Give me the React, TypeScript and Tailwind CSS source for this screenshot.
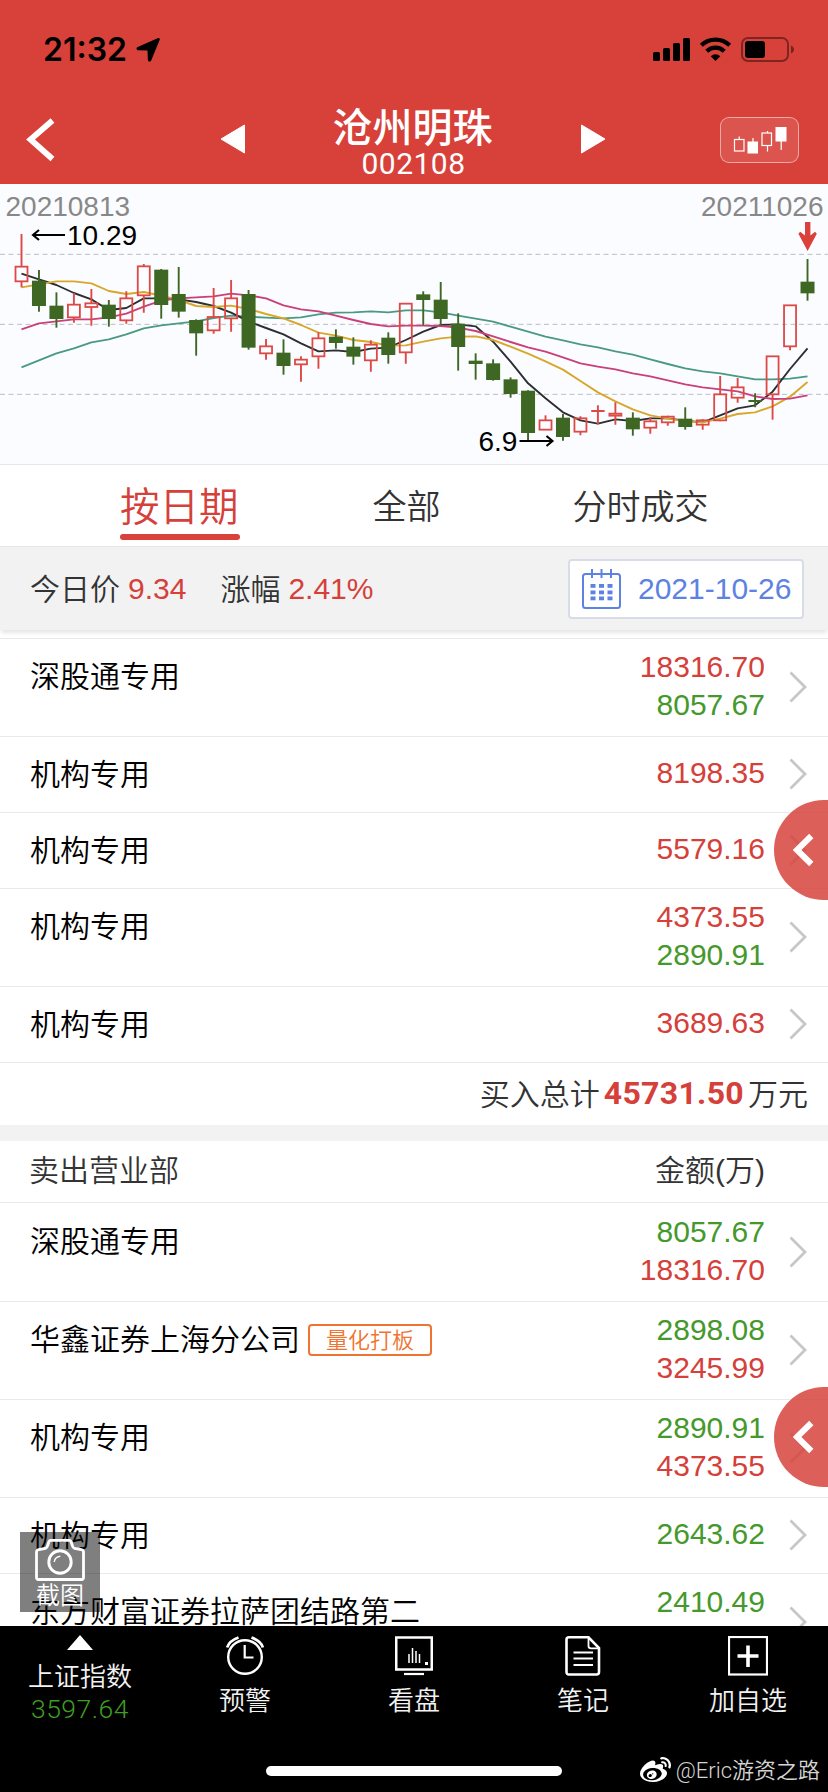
import React from "react";
import { FaWeibo } from "react-icons/fa";

const SANS = "font-['Liberation_Sans','Noto_Sans_CJK_SC',sans-serif]";
const CJK = "font-['Noto_Sans_CJK_SC',sans-serif]";

const RED = "#dd4a45";
const GREEN = "#3f6724";
const STEP = 17.467;
const FIRST_X = 21.5;

// high, body top, body bottom, low, direction; vertical values in thirds of a pixel
type Candle = [number, number, number, number, "r" | "g"];
const candles: Candle[] = [
  [162, 260, 304, 322, "r"], [270, 302, 378, 395, "g"], [337, 377, 417, 443, "g"],
  [339, 374, 412, 428, "r"], [327, 370, 381, 437, "r"], [360, 374, 417, 440, "g"],
  [334, 355, 421, 431, "r"], [252, 259, 346, 398, "r"], [267, 269, 375, 416, "g"],
  [261, 342, 395, 413, "g"], [418, 420, 460, 527, "g"], [324, 411, 451, 461, "r"],
  [300, 355, 415, 455, "r"], [330, 342, 503, 509, "g"], [477, 499, 520, 539, "r"],
  [478, 518, 558, 584, "g"], [529, 539, 553, 605, "r"], [457, 475, 529, 566, "r"],
  [448, 470, 489, 506, "g"], [472, 500, 530, 554, "g"], [481, 494, 541, 575, "r"],
  [457, 473, 525, 551, "g"], [369, 371, 517, 551, "r"], [334, 343, 360, 436, "g"],
  [306, 359, 417, 437, "g"], [400, 431, 501, 572, "g"], [520, 542, 552, 599, "g"],
  [538, 550, 600, 602, "g"], [592, 598, 642, 653, "g"], [631, 632, 759, 781, "g"],
  [706, 721, 749, 749, "r"], [702, 713, 771, 782, "g"], [709, 715, 755, 766, "r"],
  [676, 693, 693, 733, "r"], [667, 701, 707, 734, "r"], [697, 713, 748, 767, "g"],
  [712, 724, 743, 761, "r"], [707, 710, 727, 737, "r"], [682, 716, 741, 749, "g"],
  [718, 721, 734, 749, "r"], [588, 643, 721, 724, "r"], [594, 622, 653, 668, "r"],
  [640, 663, 663, 682, "g"], [529, 529, 643, 719, "r"], [375, 376, 499, 511, "r"],
  [237, 305, 340, 362, "g"],
];

const averages: { color: string; values: number[] }[] = [
  {
    color: "#4a9a80",
    values: [562, 541, 520, 505, 487, 478, 463, 445, 436, 430, 424, 414, 407, 410, 413, 415, 412, 403, 398, 397, 394, 397, 391, 391, 397, 407, 416, 425, 440, 455, 470, 481, 493, 502, 514, 524, 538, 552, 565, 574, 580, 589, 598, 598, 596, 589],
  },
  {
    color: "#2b2f31",
    values: [281, 298, 315, 339, 358, 390, 384, 355, 355, 358, 366, 378, 398, 424, 444, 463, 490, 514, 511, 516, 506, 503, 480, 455, 435, 433, 439, 485, 545, 610, 655, 697, 721, 731, 718, 723, 715, 715, 722, 727, 706, 685, 676, 635, 567, 505],
  },
  {
    color: "#d8a728",
    values: [322, 313, 304, 304, 310, 333, 342, 336, 347, 360, 378, 381, 377, 387, 402, 415, 435, 458, 467, 480, 486, 497, 496, 485, 475, 470, 469, 480, 500, 521, 544, 569, 603, 637, 664, 688, 706, 716, 724, 727, 716, 702, 697, 679, 650, 606],
  },
  {
    color: "#c9407a",
    values: [448, 430, 424, 418, 418, 412, 401, 380, 362, 355, 352, 349, 341, 346, 355, 376, 388, 394, 407, 420, 432, 439, 437, 437, 438, 443, 453, 469, 486, 502, 515, 532, 550, 560, 568, 580, 589, 601, 613, 622, 628, 634, 649, 657, 656, 646],
  },
];

const cx = (i: number) => FIRST_X + i * STEP;
const cy = (v: number) => v / 3 - 4;

function KLine() {
  return (
    <svg className="block h-[280px] w-full bg-[#fbfcff]" viewBox="0 0 828 280">
      {[223, 433, 643].map((v) => (
        <line key={v} x1="0" x2="828" y1={cy(v)} y2={cy(v)} stroke="#bcbcc4" strokeWidth="1" strokeDasharray="5 3.500" />
      ))}
      {averages.map((a) => (
        <polyline
          key={a.color}
          fill="none"
          stroke={a.color}
          strokeWidth="1.9"
          strokeLinejoin="round"
          points={a.values.map((v, i) => `${cx(i)},${cy(v)}`).join(" ")}
        />
      ))}
      {candles.map(([hi, top, bottom, lo, dir], i) => {
        const x = cx(i);
        if (top === bottom) {
          const c = dir === "r" ? RED : GREEN;
          return (
            <g key={i} stroke={c} strokeWidth="1.9">
              <path d={`M${x} ${cy(hi)}V${cy(lo)}M${x - 6.7} ${cy(top)}H${x + 6.7}`} />
            </g>
          );
        }
        if (dir === "g") {
          return (
            <g key={i}>
              <path d={`M${x} ${cy(hi)}V${cy(lo)}`} stroke={GREEN} strokeWidth="1.9" />
              <rect x={x - 7} y={cy(top)} width="14" height={cy(bottom) - cy(top)} fill={GREEN} />
            </g>
          );
        }
        return (
          <g key={i} stroke={RED} fill="none">
            <path d={`M${x} ${cy(hi)}V${cy(top)}M${x} ${cy(bottom)}V${cy(lo)}`} strokeWidth="1.9" />
            <rect x={x - 6} y={cy(top)} width="12" height={cy(bottom) - cy(top)} strokeWidth="1.800" />
          </g>
        );
      })}
      <g className={SANS} fontSize="28">
        <text x="5.5" y="31.5" fill="#888888">20210813</text>
        <text x="823.5" y="31.5" fill="#888888" textAnchor="end">20211026</text>
        <text x="67" y="61" fill="#000">10.29</text>
        <text x="478.500" y="266.5" fill="#000">6.9</text>
      </g>
      <g stroke="#000" strokeWidth="2.1" fill="none">
        <path d="M32.500 51H65M39 46L33 51L39 56" />
        <path d="M519.500 257H552M546.500 252L552.500 257L546.500 262" />
      </g>
      <path d="M805 38h5.4v13.500l4.600-3.700 1.800 1.900-9.200 17.300-9.200-17.300 1.800-1.900 4.800 3.700z" fill="#d9413a" />
    </svg>
  );
}

function StatusBar() {
  return (
    <div className="flex h-[98px] items-center pl-[43px] pr-[33px] pt-px">
      <span className="font-['Inter',sans-serif] text-[32px] font-semibold leading-none text-black">21:32</span>
      <svg className="ml-[8px] h-[26px] w-[26px]" viewBox="0 0 26 26">
        <path d="M23.2 1.1c1-.4 2 .5 1.500 1.600L16.300 23.300c-.7 1.800-3.200 1.600-3.400-.4L12.500 13.600 3.200 13.200c-2-.2-2.300-2.600-.5-3.300z" />
      </svg>
      <svg className="ml-auto h-[28px] w-[142px]" viewBox="0 0 142 28">
        <rect x="0" y="16" width="7" height="9" rx="1.500" />
        <rect x="10" y="12" width="7" height="13" rx="1.500" />
        <rect x="20" y="7" width="7" height="18" rx="1.500" />
        <rect x="30" y="2" width="7" height="23" rx="1.500" />
        <g fill="none" stroke="#000" strokeWidth="4.200">
          <path d="M48.300 9.300a20.500 20.500 0 0 1 28.400 0" />
          <path d="M53.700 15.300a12.500 12.500 0 0 1 17.600 0" />
        </g>
        <path d="M57.700 20.200a7 7 0 0 1 9.600 0L62.500 25z" />
        <rect x="89" y="2" width="46" height="23" rx="6" fill="none" stroke="#000" strokeOpacity=".42" strokeWidth="2" />
        <rect x="92" y="5" width="20" height="17" rx="3" />
        <path d="M138 9.500c4 1.500 4 6.500 0 8z" fillOpacity=".45" />
      </svg>
    </div>
  );
}

function TitleBar() {
  return (
    <div className="flex h-[86px] items-center justify-between pl-[26px] pr-[29px]">
      <svg className="mt-[-2px] h-[44px] w-[100px]" viewBox="0 0 100 44">
        <path d="M26.500 2.500L4.500 21.500L26.500 41" fill="none" stroke="#fff" strokeWidth="5.800" />
      </svg>
      <div className="flex items-center">
        <svg className="mt-[-4px] h-[30px] w-[25px]" viewBox="0 0 25 30">
          <path d="M24.500 1v28L1 15z" fill="#fff" stroke="#fff" strokeLinejoin="round" />
        </svg>
        <div className="flex w-[336px] flex-col items-center pt-[3px] text-white">
          <span className={`${CJK} text-[40px] font-medium leading-[40px]`}>沧州明珠</span>
          <span className="pl-[2px] pt-[3px] font-['Roboto',sans-serif] text-[30px] leading-[32px] tracking-[0.5px]">002108</span>
        </div>
        <svg className="mt-[-4px] h-[30px] w-[25px]" viewBox="0 0 25 30">
          <path d="M.5 1v28L24 15z" fill="#fff" stroke="#fff" strokeLinejoin="round" />
        </svg>
      </div>
      <div className="flex w-[100px] justify-end">
        <div className="mt-[-3px] h-[46px] w-[79px] rounded-[9px] border border-white/50 bg-white/10">
          <svg className="h-full w-full" viewBox="0 0 77 44" fill="none" stroke="#fff" strokeWidth="1.200">
            <rect x="13.500" y="21.500" width="9.500" height="11.500" />
            <path d="M18.200 18.500v3M32 20v4M46.500 13v2M46.500 27.500v6M60.200 22v10" />
            <rect x="26.500" y="23.500" width="10.500" height="12" fill="#fff" stroke="none" />
            <rect x="41" y="15" width="9.500" height="12.500" />
            <rect x="54.500" y="9" width="11" height="14.500" fill="#fff" stroke="none" />
          </svg>
        </div>
      </div>
    </div>
  );
}

function Tabs() {
  return (
    <div className={`${CJK} flex h-[83px] border-b border-t border-[#e6e6e6] text-[#333] leading-[80px]`}>
      <div className="ml-[120px] flex w-[120px] flex-col">
        <span className="h-[69px] text-[39.500px] font-[350] leading-[77px] text-[#d5403a]">按日期</span>
        <span className="h-[6px] rounded-full bg-[#d9413a]" />
      </div>
      <span className="ml-[132.500px] text-[34px] font-[350]">全部</span>
      <span className="ml-[132px] text-[34px] font-[350]">分时成交</span>
    </div>
  );
}

function PriceBar() {
  return (
    <div className="relative z-10 flex h-[83px] items-center bg-[#f2f2f2] pl-[30px] pr-[24px] text-[30px] text-[#333] shadow-[0_4px_4px_-1px_rgba(0,0,0,0.1)]">
      <span className={`${CJK} mt-[-2px] font-[350]`}>今日价</span>
      <span className={`${SANS} ml-[8px] text-[#d5403a]`}>9.34</span>
      <span className={`${CJK} ml-[34px] mt-[-2px] font-[350]`}>涨幅</span>
      <span className={`${SANS} ml-[8px] text-[#d5403a]`}>2.41%</span>
      <div className="ml-auto mt-px flex h-[60px] w-[236px] items-center rounded border-2 border-[#d8dce8] bg-white pl-3">
        <svg className="h-[40px] w-[39px]" viewBox="0 0 39 40" fill="none" stroke="#5d82e3" strokeWidth="2">
          <rect x="1" y="5" width="37" height="34" rx="2.500" />
          <path d="M10 0v9M19.500 0v9M29 0v9" />
          <g fill="#5d82e3" stroke="none">
            {[15, 21.500, 27.500].map((y) =>
              [8.500, 17, 25.500].map((x) => <rect key={`${x}-${y}`} x={x} y={y} width="5" height="3.800" />)
            )}
          </g>
        </svg>
        <span className={`${SANS} ml-[17px] mt-[-2px] text-[#5d82e3]`}>2021-10-26</span>
      </div>
    </div>
  );
}

type RowData = { name: string; tag?: string; tall?: boolean; amounts: [string, "r" | "g"][] };

const buys: RowData[] = [
  { name: "深股通专用", tall: true, amounts: [["18316.70", "r"], ["8057.67", "g"]] },
  { name: "机构专用", amounts: [["8198.35", "r"]] },
  { name: "机构专用", amounts: [["5579.16", "r"]] },
  { name: "机构专用", tall: true, amounts: [["4373.55", "r"], ["2890.91", "g"]] },
  { name: "机构专用", amounts: [["3689.63", "r"]] },
];

const sells: RowData[] = [
  { name: "深股通专用", tall: true, amounts: [["8057.67", "g"], ["18316.70", "r"]] },
  { name: "华鑫证券上海分公司", tag: "量化打板", tall: true, amounts: [["2898.08", "g"], ["3245.99", "r"]] },
  { name: "机构专用", tall: true, amounts: [["2890.91", "g"], ["4373.55", "r"]] },
  { name: "机构专用", amounts: [["2643.62", "g"]] },
  { name: "东方财富证券拉萨团结路第二", tall: true, amounts: [["2410.49", "g"]] },
];

function Row({ row }: { row: RowData }) {
  return (
    <div className={`flex shrink-0 border-b border-[#e9e9e9] pl-[30px] pr-[21px] ${row.tall ? "h-[98px]" : "h-[76px]"}`}>
      <div className="flex h-[70px] items-center">
        <span className={`${CJK} text-[30px] font-[350] text-black`}>{row.name}</span>
        {row.tag && (
          <span className={`${CJK} ml-2 mt-[5px] flex h-8 w-[124px] items-center justify-center rounded border-2 border-[#ef7432] pb-[2px] text-[22px] font-[350] text-[#ef7432]`}>
            {row.tag}
          </span>
        )}
      </div>
      <div className={`${SANS} ml-auto flex flex-col text-right text-[30px] leading-[38px] ${row.tall ? "pt-[9px]" : "pt-[17px]"}`}>
        {row.amounts.map(([v, c]) => (
          <span key={v} className={c === "r" ? "text-[#d5403a]" : "text-[#45992c]"}>{v}</span>
        ))}
      </div>
      <svg className="ml-[24px] mt-[-1px] h-[32px] w-[18px] self-center" viewBox="0 0 18 32">
        <path d="M1.500 1.500L16 16L1.500 30.500" fill="none" stroke="#c7c7c7" strokeWidth="2.800" />
      </svg>
    </div>
  );
}

function Lists() {
  return (
    <div className="flex h-[996px] flex-col overflow-hidden bg-white">
      <div className="h-[9px] shrink-0 border-b border-[#e9e9e9]" />
      {buys.map((r, i) => <Row key={i} row={r} />)}
      <div className={`${CJK} flex h-[62px] shrink-0 items-center justify-end pb-[4px] pr-[20px] text-[30px] font-[350] text-[#333]`}>
        <span>买入总计</span>
        <span className="mx-[4px] mt-[2px] font-['Roboto',sans-serif] text-[32px] font-bold tracking-[0.3px] text-[#d5403a]">45731.50</span>
        <span>万元</span>
      </div>
      <div className="h-4 shrink-0 bg-[#f2f2f2]" />
      <div className="flex h-[62px] shrink-0 items-center justify-between border-b border-[#e9e9e9] pb-[3px] pl-[29px] pr-[63px] text-[30px] font-[350] text-[#333]">
        <span className={`${CJK} mt-[-3px]`}>卖出营业部</span>
        <span className={SANS}>金额(万)</span>
      </div>
      <div className="flex shrink-0 flex-col pt-px">
        {sells.map((r, i) => <Row key={i} row={r} />)}
      </div>
    </div>
  );
}

function SideHandle({ className }: { className: string }) {
  return (
    <div className={`absolute right-0 z-20 flex h-[100px] w-[54px] items-center rounded-l-[50px] bg-[#d7433d]/85 ${className}`}>
      <svg className="ml-[18px] h-[34px] w-[22px]" viewBox="0 0 22 34">
        <path d="M19.300 3L5 17L19.300 31" fill="none" stroke="#fff" strokeWidth="6" />
      </svg>
    </div>
  );
}

function CaptureButton() {
  return (
    <div className="absolute left-[20px] top-[1532px] z-20 flex h-[80px] w-[80px] flex-col items-center bg-black/50 pt-[7px]">
      <svg className="h-[42px] w-[50px] shrink-0" viewBox="0 0 50 42" fill="none" stroke="#fff">
        <path d="M4 10.500L10.500 9.500Q12 9 12.500 7L14 2.500Q14.500 1.300 16 1.300H34Q35.500 1.300 36 2.500L37.500 7Q38 9 39.500 9.500L46 10.500Q48.500 11 48.500 13V38.500Q48.500 40.500 46.500 40.500H3.500Q1.500 40.500 1.500 38.500V13Q1.500 11 4 10.500Z" strokeWidth="2.800" />
        <circle cx="25" cy="23" r="11.200" strokeWidth="2.900" />
        <path d="M19.300 23q.5-5 6-5.700" strokeWidth="1.400" />
      </svg>
      <span className={`${CJK} mt-px text-[24px] font-[350] leading-[24px] text-white`}>截图</span>
    </div>
  );
}

function NavItem({ label, width, children }: { label: string; width: string; children: React.ReactNode }) {
  return (
    <div className={`flex shrink-0 flex-col items-center pt-[10px] ${width}`}>
      {children}
      <span className="mt-[5px] text-[26px] leading-[36px]">{label}</span>
    </div>
  );
}

function BottomBar() {
  return (
    <div className={`${CJK} flex h-[166px] flex-col bg-black text-[#f2f2f2]`}>
      <div className="flex h-[140px] font-[350]">
        <div className="flex w-[160px] shrink-0 flex-col items-center pt-[9px]">
          <svg className="h-[15px] w-[26px]" viewBox="0 0 26 15"><path d="M13 0l13 15H0z" fill="#fff" /></svg>
          <span className="mt-[7px] text-[26px] leading-[36px]">上证指数</span>
          <span className="mt-px font-['Roboto',sans-serif] text-[26.500px] font-[350] leading-[30px] tracking-[0.5px] text-[#3f9e22]">3597.64</span>
        </div>
        <NavItem label="预警" width="w-[170px]">
          <svg className="h-[40px] w-[38px]" viewBox="0 0 38 40" fill="none" stroke="#fff">
            <circle cx="19" cy="21" r="16.800" strokeWidth="2.400" />
            <path d="M18.700 9v12.500H27.500" strokeWidth="2.200" />
            <path d="M1.200 11.500Q3 5 12.500 1.500M36.800 11.500Q35 5 25.500 1.500" strokeWidth="2.800" />
          </svg>
        </NavItem>
        <NavItem label="看盘" width="w-[168px]">
          <svg className="h-[40px] w-[38px]" viewBox="0 0 38 40" fill="none" stroke="#fff">
            <path d="M1.200 1.500H36.800V33.500H1.200z" strokeWidth="2.600" />
            <path d="M9 38H29" strokeWidth="2.200" />
            <path d="M14 18v9M17.500 12v15M21 15v12M24.500 18v9" strokeWidth="1.500" />
            <path d="M30 27.500h3" strokeWidth="3" />
          </svg>
        </NavItem>
        <NavItem label="笔记" width="w-[170px]">
          <svg className="h-[40px] w-[36px]" viewBox="0 0 36 40" fill="none" stroke="#fff">
            <path d="M4 1.300H23.500L34 12V36Q34 38.500 31.500 38.500H4Q1.500 38.500 1.500 36V3.500Q1.500 1.300 4 1.300Z" strokeWidth="2.600" />
            <path d="M23.500 1.500V10Q23.500 12.300 26 12.300H34" strokeWidth="1.800" />
            <path d="M8.500 16.500H28M8.500 22.500H28M8.500 29H28" strokeWidth="2" />
          </svg>
        </NavItem>
        <NavItem label="加自选" width="w-[160px]">
          <svg className="h-[40px] w-[40px]" viewBox="0 0 40 40" fill="none" stroke="#fff">
            <rect x="1" y="1" width="38" height="37.500" strokeWidth="2.200" />
            <path d="M20 9.500v21.500M9.500 20H30.500" strokeWidth="3.600" />
          </svg>
        </NavItem>
      </div>
      <div className="ml-[266px] h-[10px] w-[296px] rounded-full bg-white" />
    </div>
  );
}

function Watermark() {
  return (
    <div className="absolute bottom-[3px] right-[8px] z-20 flex items-center font-['Roboto','Noto_Sans_CJK_SC',sans-serif] text-[22px] font-[350] leading-[36px] text-[#d4d4d4]">
      <FaWeibo className="mr-[5px] h-[31px] w-[31px] text-white" />
      <span className="pt-px">@Eric游资之路</span>
    </div>
  );
}

export default function App() {
  return (
    <div className="relative flex h-[1792px] w-[828px] flex-col overflow-hidden bg-white">
      <header className="h-[184px] bg-[#d7413a]">
        <StatusBar />
        <TitleBar />
      </header>
      <KLine />
      <Tabs />
      <PriceBar />
      <Lists />
      <BottomBar />
      <SideHandle className="top-[800px]" />
      <SideHandle className="top-[1387px]" />
      <CaptureButton />
      <Watermark />
    </div>
  );
}
